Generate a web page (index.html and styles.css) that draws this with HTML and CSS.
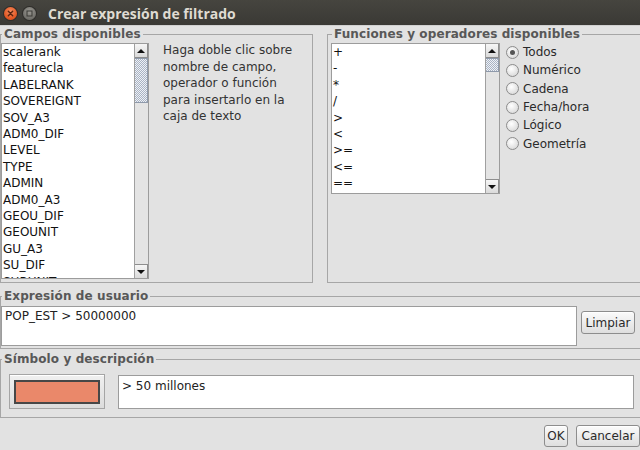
FILE: index.html
```html
<!DOCTYPE html>
<html lang="es">
<head>
  <meta charset="utf-8">
  <link rel="stylesheet" href="styles.css">
</head>
<body>

<div class="window">
  <div class="titlebar">
    <span class="wbtn wbtn-close">
      <svg width="13" height="13" viewBox="0 0 13 13"><path d="M4.3 4.3 L8.7 8.7 M8.7 4.3 L4.3 8.7" stroke="#5a2410" stroke-width="1.4" stroke-linecap="round"/></svg>
    </span>
    <span class="wbtn wbtn-restore">
      <svg width="13" height="13" viewBox="0 0 13 13"><rect x="4" y="4" width="5" height="5" fill="none" stroke="#3b3a36" stroke-width="1"/></svg>
    </span>
    <span class="title">Crear expresión de filtrado</span>
  </div>

  <div class="dialog">
    <div class="top-row">
      <fieldset class="group fields-group">
        <legend>Campos disponibles</legend>
        <div class="fields-body">
          <div class="listbox fields-list">
            <ul class="items">
              <li>scalerank</li>
              <li>featurecla</li>
              <li>LABELRANK</li>
              <li>SOVEREIGNT</li>
              <li>SOV_A3</li>
              <li>ADM0_DIF</li>
              <li>LEVEL</li>
              <li>TYPE</li>
              <li>ADMIN</li>
              <li>ADM0_A3</li>
              <li>GEOU_DIF</li>
              <li>GEOUNIT</li>
              <li>GU_A3</li>
              <li>SU_DIF</li>
              <li>SUBUNIT</li>
            </ul>
            <div class="vscroll">
              <span class="arrow arrow-up"></span>
              <div class="track"><span class="thumb thumb-fields"></span></div>
              <span class="arrow arrow-down"></span>
            </div>
          </div>
          <p class="hint">Haga doble clic sobre<br>nombre de campo,<br>operador o función<br>para insertarlo en la<br>caja de texto</p>
        </div>
      </fieldset>

      <fieldset class="group ops-group">
        <legend>Funciones y operadores disponibles</legend>
        <div class="ops-body">
          <div class="listbox ops-list">
            <ul class="items">
              <li>+</li>
              <li>-</li>
              <li>*</li>
              <li>/</li>
              <li>&gt;</li>
              <li>&lt;</li>
              <li>&gt;=</li>
              <li>&lt;=</li>
              <li>==</li>
            </ul>
            <div class="vscroll">
              <span class="arrow arrow-up"></span>
              <div class="track"><span class="thumb thumb-ops"></span></div>
              <span class="arrow arrow-down"></span>
            </div>
          </div>
          <ul class="radios">
            <li><span class="radio checked"></span>Todos</li>
            <li><span class="radio"></span>Numérico</li>
            <li><span class="radio"></span>Cadena</li>
            <li><span class="radio"></span>Fecha/hora</li>
            <li><span class="radio"></span>Lógico</li>
            <li><span class="radio"></span>Geometría</li>
          </ul>
        </div>
      </fieldset>
    </div>

    <fieldset class="group expr-group">
      <legend>Expresión de usuario</legend>
      <div class="expr-body">
        <div class="textbox expr-field">POP_EST &gt; 50000000</div>
        <a class="button btn-clear" href="#">Limpiar</a>
      </div>
    </fieldset>

    <fieldset class="group symbol-group">
      <legend>Símbolo y descripción</legend>
      <div class="symbol-body">
        <a class="button color-btn" href="#"><span class="swatch"></span></a>
        <div class="textbox desc-field">&gt; 50 millones</div>
      </div>
    </fieldset>

    <div class="actions">
      <a class="button btn-ok" href="#">OK</a>
      <a class="button btn-cancel" href="#">Cancelar</a>
    </div>
  </div>
</div>

</body>
</html>
```

FILE: styles.css
```css
* {
  box-sizing: border-box;
}

body {
  margin: 0;
  width: 640px;
  height: 450px;
  overflow: hidden;
  background: #e2e2e2;
  font-family: "DejaVu Sans", sans-serif;
  font-size: 12px;
  color: #1e1e1e;
}

.window {
  width: 644px;
}

/* barra de titulo */
.titlebar {
  height: 26px;
  display: flex;
  align-items: center;
  padding-left: 4px;
  background: linear-gradient(#46453f, #3a3935);
  border-bottom: 1px solid #d0d0d0;
}

.wbtn {
  width: 13px;
  height: 13px;
  border-radius: 50%;
  display: flex;
  margin-top: 2px;
}

.wbtn-close {
  background: radial-gradient(circle at 50% 35%, #f58a5c, #e0531f 70%);
  box-shadow: 0 0 0 1px #2e2d2a;
}

.wbtn-restore {
  margin-left: 6px;
  background: radial-gradient(circle at 50% 35%, #9a9892, #6f6e69 70%);
  box-shadow: 0 0 0 1px #2e2d2a;
}

.title {
  margin-left: 12px;
  margin-top: 1px;
  font-family: "Open Sans", sans-serif;
  font-weight: bold;
  font-size: 14px;
  color: #dfdbd2;
}

.dialog {
  padding-top: 1px;
}

/* bordes con titulo */
.group {
  margin: 0;
  min-width: 0;
  border: 1px solid #a6a6a6;
  padding: 1px 0 3px 0;
}

.group legend {
  margin-left: 1px;
  padding: 0 2px;
  font-weight: bold;
  font-size: 12px;
  line-height: 15px;
  letter-spacing: 0.1px;
  color: #585858;
}

.top-row {
  display: flex;
  gap: 14px;
}

.fields-group {
  width: 313px;
}

.ops-group {
  flex: 1;
  padding-left: 3px;
}

.fields-body,
.ops-body {
  display: flex;
}

/* listas */
.listbox {
  display: flex;
  background: #ffffff;
  border: 1px solid #9c9c9c;
}

.fields-list {
  width: 148px;
  height: 236px;
}

.ops-list {
  width: 169px;
  height: 151px;
}

.items {
  flex: 1;
  margin: 0;
  padding: 0 0 0 1px;
  list-style: none;
  overflow: hidden;
  line-height: 16.4px;
  color: #111;
}

.vscroll {
  width: 14px;
  display: flex;
  flex-direction: column;
  background: #e4e4e4;
  border-left: 1px solid #a0a0a0;
}

.arrow {
  height: 14px;
  display: flex;
  align-items: center;
  justify-content: center;
  background: linear-gradient(#f6f6f6, #dadada);
  border: 1px solid #8e8e8e;
  border-left: 0;
}

.arrow::before {
  content: "";
  border-left: 4px solid transparent;
  border-right: 4px solid transparent;
}

.arrow-up::before {
  border-bottom: 4px solid #111;
}

.arrow-down::before {
  border-top: 4px solid #111;
}

.arrow-up {
  border-top: 0;
}

.arrow-down {
  border-bottom: 0;
}

.track {
  flex: 1;
}

.thumb {
  display: block;
  border: 1px solid #8f9aab;
  border-left: 0;
  background: repeating-conic-gradient(#a9b3c3 0 25%, #eef1f6 0 50%) 0 0 / 2px 2px;
}

.thumb-fields {
  height: 45px;
}

.thumb-ops {
  height: 14px;
}

.hint {
  margin: -1px 0 0 14px;
  line-height: 16.5px;
  color: #333333;
}

/* radios */
.radios {
  margin: 0 0 0 6px;
  padding: 0;
  list-style: none;
  color: #2a2a2a;
}

.radios li {
  height: 18.3px;
  display: flex;
  align-items: center;
}

.radio {
  width: 13px;
  height: 13px;
  margin-right: 4px;
  border-radius: 50%;
  border: 1px solid #8c8c8c;
  background: radial-gradient(circle at 40% 35%, #ffffff, #dcdcdc 75%);
  display: flex;
  align-items: center;
  justify-content: center;
}

.radio.checked::after {
  content: "";
  width: 5px;
  height: 5px;
  border-radius: 50%;
  background: #555;
}

/* expresion */
.expr-group {
  margin-top: 6px;
  padding: 2px 0 2px 0;
}

.expr-body {
  display: flex;
  align-items: flex-start;
}

.textbox {
  background: #ffffff;
  border: 1px solid #9c9c9c;
  padding: 1px 3px;
  line-height: 16px;
  color: #222;
}

.expr-field {
  width: 576px;
  height: 40px;
}

.button {
  display: flex;
  align-items: center;
  justify-content: center;
  text-decoration: none;
  color: #2a2a2a;
  border: 1px solid #8d8d8d;
  border-radius: 3px;
  background: linear-gradient(#fbfbfb, #dedede);
  box-shadow: inset 0 1px 0 #ffffff;
}

.btn-clear {
  margin: 5px 0 0 4px;
  width: 54px;
  height: 23px;
}

/* simbolo */
.symbol-group {
  margin-top: 3px;
  padding: 7px 0 8px 0;
}

.symbol-body {
  display: flex;
  align-items: flex-start;
}

.color-btn {
  margin-left: 8px;
  width: 96px;
  height: 35px;
  border-radius: 0;
  border-color: #a5a5a5;
  background: linear-gradient(#f0f0f0, #dcdcdc);
}

.swatch {
  width: 86px;
  height: 24px;
  background: #ea886a;
  border: 2px solid #474747;
}

.desc-field {
  margin: 1px 0 0 13px;
  width: 516px;
  height: 34px;
  padding-top: 2px;
}

/* botones */
.actions {
  display: flex;
  justify-content: flex-end;
  gap: 8px;
  margin-top: 7px;
  padding-right: 4px;
}

.btn-ok {
  width: 24px;
  height: 22px;
}

.btn-cancel {
  width: 64px;
  height: 22px;
}
```
